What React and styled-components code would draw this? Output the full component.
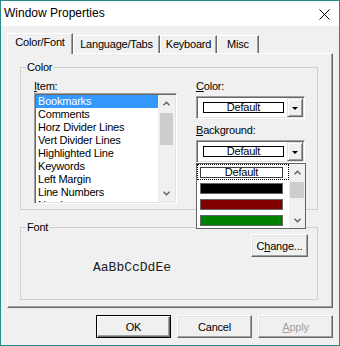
import React from "react";
import styled, { createGlobalStyle } from "styled-components";

const Global = createGlobalStyle`
  html, body { margin: 0; padding: 0; background: #fff; }
  body {
    font-family: "Liberation Sans", Arial, sans-serif;
    font-size: 11px;
    letter-spacing: -0.2px;
    color: #000;
  }
  * { box-sizing: border-box; }
  u { text-decoration-thickness: 1px; text-underline-offset: 1px; }
`;

const Window = styled.div`
  width: 340px;
  height: 346px;
  border: 1px solid #2b8a8c;
  background: #f0f0f0;
  display: flex;
  flex-direction: column;
`;

const TitleBar = styled.div`
  height: 25px;
  flex: none;
  background: #fff;
  display: flex;
  align-items: center;
  justify-content: space-between;
  padding: 0 9px 0 3px;
`;

const Title = styled.span`
  font-size: 12px;
  line-height: 25px;
  letter-spacing: 0;
`;

const CloseIcon = styled.svg`
  margin-top: 2px;
  display: block;
`;

const Body = styled.div`
  flex: 1;
  padding: 7px 6px 0;
  display: flex;
  flex-direction: column;
`;

const TabRow = styled.div`
  display: flex;
  align-items: flex-end;
  height: 20px;
`;

const Tab = styled.div`
  position: relative;
  z-index: ${(p) => (p.$active ? 2 : 1)};
  width: ${(p) => p.$w}px;
  height: ${(p) => (p.$active ? 21 : 18)}px;
  margin-bottom: ${(p) => (p.$active ? -1 : 0)}px;
  background: #f0f0f0;
  border-top: 1px solid #fff;
  border-left: 1px solid #fff;
  border-right: 1px solid #696969;
  box-shadow: inset -1px 0 #a0a0a0;
  display: flex;
  justify-content: center;
  padding-top: 2px;
  line-height: 13px;
  white-space: nowrap;
`;

const Panel = styled.div`
  height: 255px;
  border-top: 1px solid #fff;
  border-left: 1px solid #fff;
  border-right: 1px solid #696969;
  border-bottom: 1px solid #696969;
  box-shadow: inset -1px -1px #a0a0a0;
  padding: 7px 14px 0 12px;
`;

const Group = styled.fieldset`
  margin: ${(p) => p.$mt || 0}px 0 0;
  padding: 0;
  min-width: 0;
  height: ${(p) => p.$h}px;
  border: 1px solid #d0d0d0;
`;

const Legend = styled.legend`
  margin-left: 5px;
  padding: 0 1px;
  line-height: 13px;
  font-size: 11px;
`;

const ColorGrid = styled.div`
  padding: 6px 0 0 13px;
  display: grid;
  grid-template-columns: 143px 110px;
  column-gap: 19px;
`;

const Col = styled.div`
  display: flex;
  flex-direction: column;
`;

const Label = styled.div`
  line-height: 13px;
  height: 13px;
  margin-top: ${(p) => p.$mt || 0}px;
  white-space: nowrap;
`;

const ListBox = styled.div`
  height: 111px;
  display: flex;
  background: #fff;
  border: 1px solid;
  border-color: #a0a0a0 #fff #fff #a0a0a0;
  box-shadow: inset 1px 1px #696969, inset -1px -1px #e3e3e3;
  padding: 1px;
  overflow: hidden;
`;

const Items = styled.div`
  flex: 1;
  min-width: 0;
  overflow: hidden;
`;

const ListItem = styled.div`
  line-height: 13px;
  height: 13px;
  padding-left: 2px;
  white-space: nowrap;
  background: ${(p) => (p.$sel ? "#3399ff" : "transparent")};
  color: ${(p) => (p.$sel ? "#fff" : "#000")};
`;

const ScrollBar = styled.div`
  width: ${(p) => p.$w}px;
  flex: none;
  background: #f0f0f0;
  display: flex;
  flex-direction: column;
`;

const ArrowBtn = styled.div`
  height: ${(p) => p.$h}px;
  flex: none;
  display: flex;
  align-items: center;
  justify-content: center;
`;

const Track = styled.div`
  flex: 1;
`;

const Thumb = styled.div`
  height: ${(p) => p.$h}px;
  margin: ${(p) => p.$mt}px ${(p) => p.$mx}px 0;
  background: #cdcdcd;
`;

const ComboWrap = styled.div`
  position: relative;
  margin-top: 3px;
`;

const Combo = styled.div`
  width: 109px;
  height: 23px;
  background: #fff;
  border: 1px solid;
  border-color: #a0a0a0 #fff #fff #a0a0a0;
  box-shadow: inset 1px 1px #696969, inset -1px -1px #e3e3e3;
  display: flex;
  align-items: center;
  padding: 1px 1px 1px 6px;
`;

const Swatch = styled.div`
  width: ${(p) => p.$w}px;
  height: 11px;
  flex: none;
  border: 1px solid ${(p) => p.$border};
  background: ${(p) => p.$bg};
  display: flex;
  align-items: center;
  justify-content: center;
  line-height: 9px;
  font-size: 11px;
`;

const DropBtn = styled.div`
  margin-left: auto;
  width: 16px;
  height: 19px;
  background: #f0f0f0;
  border: 1px solid;
  border-color: #e3e3e3 #696969 #696969 #e3e3e3;
  box-shadow: inset 1px 1px #fff, inset -1px -1px #a0a0a0;
  display: flex;
  align-items: center;
  justify-content: center;
`;

const Triangle = styled.div`
  width: 0;
  height: 0;
  border-left: 3px solid transparent;
  border-right: 3px solid transparent;
  border-top: 3px solid #000;
  margin-top: 1px;
`;

const DropList = styled.div`
  position: absolute;
  top: 100%;
  left: 0;
  z-index: 5;
  width: 110px;
  height: 66px;
  background: #fff;
  border: 1px solid #646464;
  display: flex;
`;

const DropItems = styled.div`
  flex: 1;
  display: flex;
  flex-direction: column;
`;

const DropItem = styled.div`
  height: 16px;
  flex: none;
  display: flex;
  align-items: center;
  padding-left: 3px;
  outline: ${(p) => (p.$focus ? "1px dotted #000" : "none")};
  outline-offset: -1px;
`;

const FontInner = styled.div`
  padding: 0 9px 0 72px;
  display: flex;
  flex-direction: column;
`;

const Button = styled.button`
  width: ${(p) => p.$w}px;
  height: 23px;
  padding: 0;
  margin: 0;
  font-family: inherit;
  font-size: 11px;
  letter-spacing: -0.2px;
  background: #f0f0f0;
  color: ${(p) => (p.disabled ? "#a0a0a0" : "#000")};
  border: 1px solid;
  border-color: ${(p) =>
    p.$default ? "#000" : "#fff #696969 #696969 #fff"};
  box-shadow: ${(p) =>
    p.$default
      ? "inset 1px 1px #fff, inset -1px -1px #696969, inset -2px -2px #a0a0a0"
      : "inset -1px -1px #a0a0a0, inset 1px 1px #e3e3e3"};
  align-self: ${(p) => (p.$right ? "flex-end" : "auto")};
`;

const Sample = styled.div`
  margin-top: 3px;
  font-family: "Liberation Mono", "Courier New", monospace;
  font-size: 13px;
  line-height: 15px;
  letter-spacing: 0;
  color: #202020;
`;

const Footer = styled.div`
  display: flex;
  justify-content: flex-end;
  gap: 6px;
  margin-top: 7px;
`;

const Chevron = ({ up }) => (
  <svg width="7" height="5" viewBox="0 0 7 5">
    <polyline
      points={up ? "0.5,4.3 3.5,1.2 6.5,4.3" : "0.5,0.7 3.5,3.8 6.5,0.7"}
      fill="none"
      stroke="#606060"
      strokeWidth="1.4"
    />
  </svg>
);

const items = [
  "Bookmarks",
  "Comments",
  "Horz Divider Lines",
  "Vert Divider Lines",
  "Highlighted Line",
  "Keywords",
  "Left Margin",
  "Line Numbers",
  "Numbers",
];

const tabs = [
  { label: "Color/Font", w: 66, active: true },
  { label: "Language/Tabs", w: 87 },
  { label: "Keyboard", w: 57 },
  { label: "Misc", w: 42 },
];

const colors = [
  { bg: "#000000" },
  { bg: "#800000" },
  { bg: "#008000" },
];

export default function App() {
  return (
    <>
      <Global />
      <Window>
        <TitleBar>
          <Title>Window Properties</Title>
          <CloseIcon width="11" height="11" viewBox="0 0 11 11">
            <path d="M0.5 0.5 L10.5 10.5 M10.5 0.5 L0.5 10.5" stroke="#000" strokeWidth="1" />
          </CloseIcon>
        </TitleBar>
        <Body>
          <TabRow>
            {tabs.map((t) => (
              <Tab key={t.label} $w={t.w} $active={t.active}>
                {t.label}
              </Tab>
            ))}
          </TabRow>
          <Panel>
            <Group $h={149}>
              <Legend>Color</Legend>
              <ColorGrid>
                <Col>
                  <Label>
                    <u>I</u>tem:
                  </Label>
                  <ListBox>
                    <Items>
                      {items.map((it, i) => (
                        <ListItem key={it} $sel={i === 0}>
                          {it}
                        </ListItem>
                      ))}
                    </Items>
                    <ScrollBar $w={17}>
                      <ArrowBtn $h={17}>
                        <Chevron up />
                      </ArrowBtn>
                      <Thumb $h={32} $mt={1} $mx={2} />
                      <Track />
                      <ArrowBtn $h={17}>
                        <Chevron />
                      </ArrowBtn>
                    </ScrollBar>
                  </ListBox>
                </Col>
                <Col>
                  <Label>
                    <u>C</u>olor:
                  </Label>
                  <ComboWrap>
                    <Combo>
                      <Swatch $w={81} $border="#000" $bg="#fff">
                        Default
                      </Swatch>
                      <DropBtn>
                        <Triangle />
                      </DropBtn>
                    </Combo>
                  </ComboWrap>
                  <Label $mt={5}>
                    <u>B</u>ackground:
                  </Label>
                  <ComboWrap>
                    <Combo>
                      <Swatch $w={81} $border="#000" $bg="#fff">
                        Default
                      </Swatch>
                      <DropBtn>
                        <Triangle />
                      </DropBtn>
                    </Combo>
                    <DropList>
                      <DropItems>
                        <DropItem $focus>
                          <Swatch $w={83} $border="#3c3c3c" $bg="#fff">
                            Default
                          </Swatch>
                        </DropItem>
                        {colors.map((c) => (
                          <DropItem key={c.bg}>
                            <Swatch $w={83} $border="#646464" $bg={c.bg} />
                          </DropItem>
                        ))}
                      </DropItems>
                      <ScrollBar $w={16}>
                        <ArrowBtn $h={16}>
                          <Chevron up />
                        </ArrowBtn>
                        <Thumb $h={16} $mt={2} $mx={1} />
                        <Track />
                        <ArrowBtn $h={16}>
                          <Chevron />
                        </ArrowBtn>
                      </ScrollBar>
                    </DropList>
                  </ComboWrap>
                </Col>
              </ColorGrid>
            </Group>
            <Group $h={79} $mt={11}>
              <Legend>Font</Legend>
              <FontInner>
                <Button $w={57} $right>
                  C<u>h</u>ange...
                </Button>
                <Sample>AaBbCcDdEe</Sample>
              </FontInner>
            </Group>
          </Panel>
          <Footer>
            <Button $w={75} $default>
              OK
            </Button>
            <Button $w={75}>Cancel</Button>
            <Button $w={75} disabled>
              <u>A</u>pply
            </Button>
          </Footer>
        </Body>
      </Window>
    </>
  );
}
